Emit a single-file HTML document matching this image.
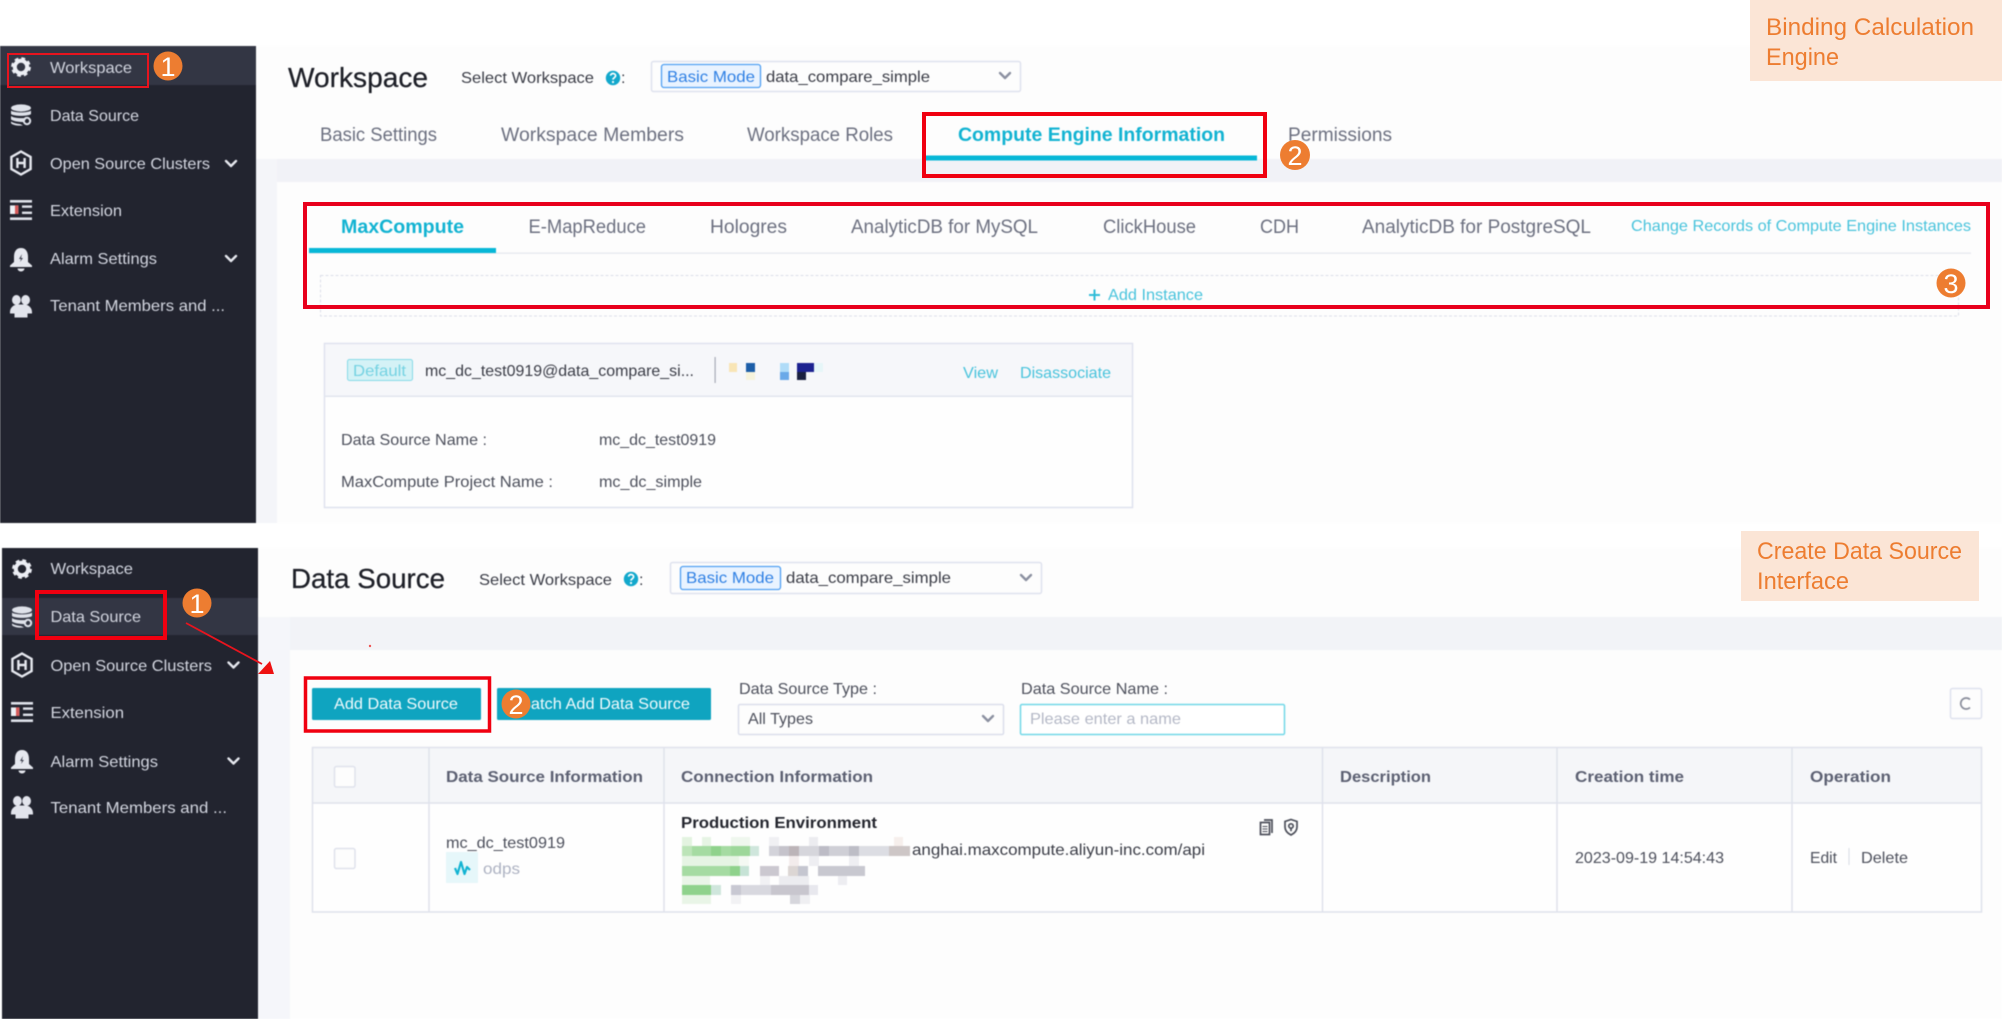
<!DOCTYPE html>
<html lang="en">
<head>
<meta charset="utf-8">
<title>Binding Calculation Engine and Create Data Source Interface</title>
<style>
html,body{margin:0;padding:0;background:#fff;width:2002px;height:1019px;overflow:hidden}
svg{display:block}
text{font-family:"Liberation Sans",Arial,sans-serif;white-space:pre}
.soft{filter:blur(.45px)}
.side{font-size:16px;fill:#d3d6e0}
.title{font-size:28px;fill:#1d1f27;stroke:#1d1f27;stroke-width:.25}
.lbl{font-size:16px;fill:#4d505c}
.dark{font-size:16px;fill:#3a3c46}
.tab{font-size:19px;fill:#6c7080}
.act{font-size:19px;font-weight:bold;fill:#12b3d2}
.link{font-size:16px;fill:#48c3dc}
.th{font-size:16px;font-weight:bold;fill:#5c6072}
.num{font-size:27px;fill:#fff;text-anchor:middle}
.note{font-size:24px;fill:#ed7d31}
.ln{fill:none;stroke:#dfe2ec;stroke-width:1.5}
.chev{fill:none;stroke-width:2.4;stroke-linecap:round;stroke-linejoin:round}
</style>
</head>
<body>
<svg xmlns="http://www.w3.org/2000/svg" width="2002" height="1019" viewBox="0 0 2002 1019">
<defs>
  <g id="i-gear">
    <circle r="8.2" fill="none" stroke="#eceef4" stroke-width="3.4" stroke-dasharray="3.6 2.85"/>
    <circle r="6.2" fill="none" stroke="#eceef4" stroke-width="4"/>
  </g>
  <g id="i-db" fill="#dfe2ea">
    <ellipse cx="0" cy="-7" rx="10" ry="3.6"/>
    <path d="M-10-4.5C-7-2 7-2 10-4.5V-1C7 1.5-7 1.5-10-1Z"/>
    <path d="M-10 1C-7 3.5 3 3.5 6 2.5L3 7C-3 7-8 6-10 4.5Z"/>
    <path d="M-10 6.5C-7 8.5-2 9-1 9L2 10.5C-4 11-9 10-10 8Z"/>
    <circle cx="6" cy="6" r="3.2" fill="none" stroke="#dfe2ea" stroke-width="2"/>
  </g>
  <g id="i-hex">
    <path d="M0-11.5 9.6-6V6L0 11.500-9.600 6V-6Z" fill="none" stroke="#e6e8ef" stroke-width="2.400"/>
    <path d="M-3.600-5V5M3.600-5V5M-3.600 0H3.600" fill="none" stroke="#e6e8ef" stroke-width="2.400"/>
  </g>
  <g id="i-ext" fill="#dfe2ea">
    <rect x="-11" y="-10" width="22" height="2.600"/>
    <rect x="-11" y="7.400" width="22" height="2.600"/>
    <rect x="-11" y="-4.600" width="8.400" height="8.600" fill="#eef0f5"/>
    <rect x="-6" y="-4.600" width="3.400" height="8.600" fill="#d65a5a"/>
    <rect x="1" y="-4.600" width="10" height="2.400"/>
    <rect x="1" y="1.600" width="10" height="2.400"/>
  </g>
  <g id="i-bell" fill="#e6e8ef">
    <path d="M0-11C-5-11-7-7-7-2V3L-11 6.500V8H11V6.500L7 3V-2C7-7 5-11 0-11Z"/>
    <path d="M-3.500 9.500A3.500 3 0 0 0 3.500 9.500Z"/>
    <path d="M1-5-2 0H0L-1 3 2-1H0Z" fill="#3b3e4c"/>
  </g>
  <g id="i-ppl" fill="#e2e4ec">
    <ellipse cx="-4.600" cy="-6" rx="4.400" ry="5"/>
    <ellipse cx="4.600" cy="-6" rx="4.400" ry="5"/>
    <path d="M-11 6C-11 2-8-.5-5-1.500H5C8-.5 11 2 11 6V7.500H6.500V11.500H-6.500V7.500H-11Z"/>
  </g>
  <g id="i-help">
    <circle r="7.200" fill="#12a8cc"/>
    <path d="M-2.400-2.400C-2.400-5.200 2.600-5.200 2.600-2.200 2.600-.3 0-.4 0 1.600" fill="none" stroke="#fff" stroke-width="1.700"/>
    <circle cy="4" r="1.100" fill="#fff"/>
  </g>
</defs>

<!-- ===== TOP PANEL ===== -->
<g class="soft">
  <rect x="256" y="46" width="1746" height="477" fill="#fdfdfd"/>
  <rect x="256" y="159" width="1746" height="23" fill="#f1f2f7"/>
  <rect x="256" y="159" width="21" height="364" fill="#f4f5f9"/>

  <!-- sidebar -->
  <rect x="0" y="46" width="256" height="477" fill="#22242f"/>
  <rect x="0" y="46" width="256" height="39" fill="#333644"/>
  <use href="#i-gear" x="21" y="67"/>
  <use href="#i-db" x="21" y="115"/>
  <use href="#i-hex" x="21" y="163"/>
  <use href="#i-ext" x="21" y="210"/>
  <use href="#i-bell" x="21" y="259"/>
  <use href="#i-ppl" x="21" y="306"/>
  <text class="side" x="50" y="73" textLength="82" lengthAdjust="spacingAndGlyphs">Workspace</text>
  <text class="side" x="50" y="121" textLength="89" lengthAdjust="spacingAndGlyphs">Data Source</text>
  <text class="side" x="50" y="169" textLength="160" lengthAdjust="spacingAndGlyphs">Open Source Clusters</text>
  <text class="side" x="50" y="216" textLength="72" lengthAdjust="spacingAndGlyphs">Extension</text>
  <text class="side" x="50" y="264" textLength="107" lengthAdjust="spacingAndGlyphs">Alarm Settings</text>
  <text class="side" x="50" y="311" textLength="175" lengthAdjust="spacingAndGlyphs">Tenant Members and ...</text>
  <path class="chev" stroke="#e6e8ef" d="M226 161l5 5 5-5M226 256l5 5 5-5"/>

  <!-- header -->
  <text class="title" x="288" y="87" textLength="140" lengthAdjust="spacingAndGlyphs">Workspace</text>
  <text class="dark" x="461" y="83" textLength="133" lengthAdjust="spacingAndGlyphs">Select Workspace</text>
  <use href="#i-help" x="613" y="78"/>
  <text class="dark" x="621" y="83">:</text>
  <rect x="651.500" y="61.500" width="369" height="30" rx="2" fill="#fdfdfd" stroke="#dfe2ee" stroke-width="1.500"/>
  <rect x="661.500" y="64.500" width="99" height="23" rx="2.500" fill="#e9f3ff" stroke="#4f9ff2" stroke-width="1.300"/>
  <text class="lbl" style="fill:#2f80e4" x="667" y="82" textLength="88" lengthAdjust="spacingAndGlyphs">Basic Mode</text>
  <text class="dark" x="766" y="82" textLength="164" lengthAdjust="spacingAndGlyphs">data_compare_simple</text>
  <path class="chev" stroke="#8b90a0" d="M1000 73l5 5 5-5"/>

  <text class="tab" x="320" y="141" textLength="117" lengthAdjust="spacingAndGlyphs">Basic Settings</text>
  <text class="tab" x="501" y="141" textLength="183" lengthAdjust="spacingAndGlyphs">Workspace Members</text>
  <text class="tab" x="747" y="141" textLength="146" lengthAdjust="spacingAndGlyphs">Workspace Roles</text>
  <text class="act" x="958" y="141" textLength="267" lengthAdjust="spacingAndGlyphs">Compute Engine Information</text>
  <rect x="925" y="155.500" width="332" height="5" fill="#07b7d7"/>
  <text class="tab" x="1288" y="141" textLength="104" lengthAdjust="spacingAndGlyphs">Permissions</text>

  <!-- engine tabs -->
  <rect x="309" y="252.500" width="1662" height="1.300" fill="#e6e8ef"/>
  <text class="act" x="341" y="233" textLength="123" lengthAdjust="spacingAndGlyphs">MaxCompute</text>
  <rect x="309" y="248" width="187" height="5" fill="#07b7d7"/>
  <text class="tab" x="528.500" y="233" textLength="117.500" lengthAdjust="spacingAndGlyphs">E-MapReduce</text>
  <text class="tab" x="710" y="233" textLength="77" lengthAdjust="spacingAndGlyphs">Hologres</text>
  <text class="tab" x="851" y="233" textLength="187" lengthAdjust="spacingAndGlyphs">AnalyticDB for MySQL</text>
  <text class="tab" x="1103" y="233" textLength="93" lengthAdjust="spacingAndGlyphs">ClickHouse</text>
  <text class="tab" x="1260" y="233" textLength="39" lengthAdjust="spacingAndGlyphs">CDH</text>
  <text class="tab" x="1362" y="233" textLength="229" lengthAdjust="spacingAndGlyphs">AnalyticDB for PostgreSQL</text>
  <text class="link" x="1631" y="231" textLength="340" lengthAdjust="spacingAndGlyphs">Change Records of Compute Engine Instances</text>

  <rect x="320.500" y="275.500" width="1638" height="40.500" fill="none" stroke="#dcdfe9" stroke-width="1" stroke-dasharray="3 2"/>
  <path d="M1089 295h11M1094.500 289.500v11" stroke="#2fbcd8" stroke-width="2"/>
  <text class="link" x="1108" y="300" textLength="95" lengthAdjust="spacingAndGlyphs">Add Instance</text>

  <!-- instance card -->
  <rect x="324.500" y="343.500" width="808" height="164" fill="#fefefe" stroke="#dfe2ee" stroke-width="1.500"/>
  <rect x="325.500" y="344.500" width="806" height="51" fill="#f6f7fa"/>
  <rect x="324.500" y="395.500" width="808" height="1.500" fill="#e2e5ef"/>
  <rect x="347.500" y="359.500" width="65" height="21" rx="2" fill="#d4f2f6" stroke="#86dae8"/>
  <text class="lbl" style="fill:#74d2e2" x="353" y="376" textLength="53" lengthAdjust="spacingAndGlyphs">Default</text>
  <text class="dark" x="425" y="376" textLength="269" lengthAdjust="spacingAndGlyphs">mc_dc_test0919@data_compare_si...</text>
  <rect x="714.500" y="357" width="1.200" height="26" fill="#a8abb6"/>
  <rect x="729" y="363" width="8" height="9" fill="#f8e5b5"/>
  <rect x="746" y="363" width="9" height="9" fill="#1d5ea8"/>
  <rect x="746" y="372" width="9" height="8" fill="#f6f3dc"/>
  <rect x="780" y="363" width="9" height="9" fill="#b0dcf8"/>
  <rect x="780" y="372" width="9" height="8" fill="#6aa9e8"/>
  <rect x="797" y="363" width="17" height="9" fill="#1c2290"/>
  <rect x="797" y="372" width="9" height="8" fill="#1a2040"/>
  <rect x="814" y="363" width="9" height="9" fill="#e6f6f8"/>
  <text class="link" x="963" y="378" textLength="35" lengthAdjust="spacingAndGlyphs">View</text>
  <text class="link" x="1020" y="378" textLength="91" lengthAdjust="spacingAndGlyphs">Disassociate</text>
  <text class="lbl" x="341" y="445" textLength="146" lengthAdjust="spacingAndGlyphs">Data Source Name :</text>
  <text class="lbl" x="599" y="445" textLength="117" lengthAdjust="spacingAndGlyphs">mc_dc_test0919</text>
  <text class="lbl" x="341" y="487" textLength="212" lengthAdjust="spacingAndGlyphs">MaxCompute Project Name :</text>
  <text class="lbl" x="599" y="487" textLength="103" lengthAdjust="spacingAndGlyphs">mc_dc_simple</text>
</g>

<!-- top annotations -->
<rect x="1750" y="0" width="252" height="81" fill="#fbe5d6"/>
<text class="note" x="1766" y="35" textLength="208" lengthAdjust="spacingAndGlyphs">Binding Calculation</text>
<text class="note" x="1766" y="65" textLength="73" lengthAdjust="spacingAndGlyphs">Engine</text>
<rect x="8" y="54" width="140" height="33" fill="none" stroke="#e8141e" stroke-width="2"/>
<rect x="924" y="114" width="341" height="62" fill="none" stroke="#f00010" stroke-width="4"/>
<rect x="305" y="204" width="1683" height="103" fill="none" stroke="#e8001c" stroke-width="4"/>
<circle cx="168" cy="66" r="14.500" fill="#ed7d31"/><text class="num" x="168" y="76">1</text>
<circle cx="1295" cy="155" r="15" fill="#ed7d31"/><text class="num" x="1295" y="165">2</text>
<circle cx="1951" cy="283" r="14.500" fill="#ed7d31"/><text class="num" x="1951" y="293">3</text>

<!-- ===== BOTTOM PANEL ===== -->
<g class="soft">
  <rect x="258" y="548" width="1744" height="471" fill="#fdfdfd"/>
  <rect x="258" y="617" width="1744" height="33" fill="#f2f3f7"/>
  <rect x="258" y="617" width="32" height="402" fill="#f5f6fa"/>

  <rect x="2" y="548" width="256" height="471" fill="#22242f"/>
  <rect x="2" y="598" width="256" height="37" fill="#333644"/>
  <use href="#i-gear" x="22" y="569"/>
  <use href="#i-db" x="22" y="617"/>
  <use href="#i-hex" x="22" y="665"/>
  <use href="#i-ext" x="22" y="712"/>
  <use href="#i-bell" x="22" y="761"/>
  <use href="#i-ppl" x="22" y="807"/>
  <text class="side" x="50.500" y="574" textLength="82.500" lengthAdjust="spacingAndGlyphs">Workspace</text>
  <text class="side" x="50.500" y="622" textLength="90.500" lengthAdjust="spacingAndGlyphs">Data Source</text>
  <text class="side" x="50.500" y="671" textLength="161.500" lengthAdjust="spacingAndGlyphs">Open Source Clusters</text>
  <text class="side" x="50.500" y="718" textLength="73.500" lengthAdjust="spacingAndGlyphs">Extension</text>
  <text class="side" x="50.500" y="767" textLength="107.500" lengthAdjust="spacingAndGlyphs">Alarm Settings</text>
  <text class="side" x="50.500" y="813" textLength="176.500" lengthAdjust="spacingAndGlyphs">Tenant Members and ...</text>
  <path class="chev" stroke="#e6e8ef" d="M228.500 662.500l5 5 5-5M228.500 758.500l5 5 5-5"/>

  <text class="title" x="291" y="588" textLength="154" lengthAdjust="spacingAndGlyphs">Data Source</text>
  <text class="dark" x="479" y="585" textLength="133" lengthAdjust="spacingAndGlyphs">Select Workspace</text>
  <use href="#i-help" x="631" y="579"/>
  <text class="dark" x="639" y="585">:</text>
  <rect x="670.500" y="562.500" width="371" height="31" rx="2" fill="#fdfdfd" stroke="#dfe2ee" stroke-width="1.500"/>
  <rect x="680.500" y="566.500" width="100" height="23" rx="2.500" fill="#e9f3ff" stroke="#4f9ff2" stroke-width="1.300"/>
  <text class="lbl" style="fill:#2f80e4" x="686" y="583" textLength="88" lengthAdjust="spacingAndGlyphs">Basic Mode</text>
  <text class="dark" x="786" y="583" textLength="165" lengthAdjust="spacingAndGlyphs">data_compare_simple</text>
  <path class="chev" stroke="#8b90a0" d="M1021 575l5 5 5-5"/>

  <!-- toolbar -->
  <rect x="312" y="688" width="169" height="32" rx="1.500" fill="#0fa4c0"/>
  <text class="side" style="fill:#f2fbfd" x="334" y="709" textLength="124" lengthAdjust="spacingAndGlyphs">Add Data Source</text>
  <rect x="497" y="688" width="214" height="32" rx="1.500" fill="#0fa4c0"/>
  <text class="side" style="fill:#f2fbfd" x="520" y="709" textLength="170" lengthAdjust="spacingAndGlyphs">Batch Add Data Source</text>
  <text class="lbl" x="739" y="694" textLength="138" lengthAdjust="spacingAndGlyphs">Data Source Type :</text>
  <text class="lbl" x="1021" y="694" textLength="147" lengthAdjust="spacingAndGlyphs">Data Source Name :</text>
  <rect x="738.500" y="704.500" width="265" height="30" rx="1.500" fill="#fdfdfd" stroke="#dcdfec" stroke-width="1.500"/>
  <text class="lbl" x="748" y="724" textLength="65" lengthAdjust="spacingAndGlyphs">All Types</text>
  <path class="chev" stroke="#8b90a0" d="M983 716l5 5 5-5"/>
  <rect x="1020.500" y="704.500" width="264" height="30" rx="1.500" fill="#fff" stroke="#72d8e8" stroke-width="1.500"/>
  <text class="lbl" style="fill:#b4b8c6" x="1030" y="724" textLength="151" lengthAdjust="spacingAndGlyphs">Please enter a name</text>
  <rect x="1950.500" y="688.500" width="31" height="30" rx="2" fill="#fdfdfd" stroke="#dfe2ee" stroke-width="1.500"/>
  <path d="M1970 699.500A5.500 5.500 0 1 0 1970 707.500" fill="none" stroke="#8a8e9c" stroke-width="1.700"/>

  <!-- table -->
  <rect x="312.500" y="747.500" width="1669" height="164.500" fill="#fefefe"/>
  <rect x="312.500" y="747.500" width="1669" height="55.500" fill="#f5f6f9"/>
  <rect class="ln" x="312.500" y="747.500" width="1669" height="164.500"/>
  <path class="ln" d="M312.500 803H1981.500M429 747.500V912M664 747.500V912M1322.500 747.500V912M1557 747.500V912M1792 747.500V912"/>
  <rect x="334.500" y="766.500" width="20.500" height="20.500" rx="2" fill="#fdfdfd" stroke="#dfe2ec" stroke-width="1.500"/>
  <rect x="334.500" y="848.500" width="20.500" height="20" rx="2" fill="#fdfdfd" stroke="#dfe2ec" stroke-width="1.500"/>
  <text class="th" x="446" y="782" textLength="197" lengthAdjust="spacingAndGlyphs">Data Source Information</text>
  <text class="th" x="681" y="782" textLength="192" lengthAdjust="spacingAndGlyphs">Connection Information</text>
  <text class="th" x="1340" y="782" textLength="91" lengthAdjust="spacingAndGlyphs">Description</text>
  <text class="th" x="1575" y="782" textLength="109" lengthAdjust="spacingAndGlyphs">Creation time</text>
  <text class="th" x="1810" y="782" textLength="81" lengthAdjust="spacingAndGlyphs">Operation</text>

  <text class="lbl" x="446" y="848" textLength="119" lengthAdjust="spacingAndGlyphs">mc_dc_test0919</text>
  <rect x="446" y="852" width="32" height="31" fill="#e6f7fa"/>
  <path d="M455 868l2.500 6 3.500-12 3.500 12 2.500-7 3 3" fill="none" stroke="#12b3d2" stroke-width="2.200" stroke-linejoin="round"/>
  <text class="lbl" style="fill:#adb2c2" x="483" y="874" textLength="37" lengthAdjust="spacingAndGlyphs">odps</text>

  <text class="th" style="fill:#24262e" x="681" y="828" textLength="196" lengthAdjust="spacingAndGlyphs">Production Environment</text>

  <!-- mosaic -->
  <g>
    <rect x="682" y="837" width="10" height="9" fill="#e3f3e0"/><rect x="702" y="837" width="9" height="9" fill="#e6f4e4"/><rect x="731" y="837" width="19" height="9" fill="#eff7ee"/><rect x="769" y="837" width="10" height="9" fill="#f0f0f3"/><rect x="809" y="837" width="9" height="9" fill="#ececf0"/><rect x="894" y="837" width="9" height="9" fill="#f6efec"/>
    <rect x="682" y="846" width="10" height="10" fill="#bce4b8"/><rect x="692" y="846" width="19" height="10" fill="#a5dba2"/><rect x="711" y="846" width="10" height="10" fill="#8fd28c"/><rect x="721" y="846" width="10" height="10" fill="#a5dba2"/><rect x="731" y="846" width="19" height="10" fill="#9dd79a"/><rect x="750" y="846" width="9" height="10" fill="#cfe6dc"/>
    <rect x="769" y="846" width="10" height="10" fill="#d3d3da"/><rect x="779" y="846" width="10" height="10" fill="#c5c3cb"/><rect x="789" y="846" width="10" height="10" fill="#bcb4b8"/><rect x="799" y="846" width="20" height="10" fill="#d6d6dc"/><rect x="819" y="846" width="10" height="10" fill="#bdbcc6"/><rect x="829" y="846" width="20" height="10" fill="#cfcfd6"/><rect x="849" y="846" width="10" height="10" fill="#bdbdc6"/><rect x="859" y="846" width="30" height="10" fill="#dcdde3"/><rect x="889" y="846" width="21" height="10" fill="#cdc6c6"/>
    <rect x="682" y="856" width="57" height="10" fill="#e6f4e4"/><rect x="739" y="856" width="10" height="10" fill="#f4f9f3"/><rect x="789" y="856" width="10" height="10" fill="#f3ecec"/><rect x="809" y="856" width="10" height="10" fill="#eeeef2"/><rect x="849" y="856" width="10" height="10" fill="#eeeef2"/>
    <rect x="682" y="866" width="48" height="10" fill="#a5dba2"/><rect x="730" y="866" width="10" height="10" fill="#8fd28c"/><rect x="740" y="866" width="9" height="10" fill="#c6e3d6"/>
    <rect x="760" y="866" width="19" height="10" fill="#cbc8d0"/><rect x="788" y="866" width="10" height="10" fill="#dcd6d4"/><rect x="798" y="866" width="10" height="10" fill="#c5c6d0"/><rect x="818" y="866" width="47" height="10" fill="#c8c8d0"/>
    <rect x="682" y="876" width="28" height="9" fill="#eaf5e8"/><rect x="760" y="876" width="10" height="9" fill="#f1f1f4"/><rect x="779" y="876" width="30" height="9" fill="#ececf0"/><rect x="838" y="876" width="9" height="9" fill="#ededf1"/>
    <rect x="682" y="885" width="29" height="10" fill="#8fd28c"/><rect x="711" y="885" width="10" height="10" fill="#cfe6dc"/>
    <rect x="731" y="885" width="10" height="10" fill="#c8c8d2"/><rect x="741" y="885" width="30" height="10" fill="#d8d8df"/><rect x="771" y="885" width="38" height="10" fill="#c8c6ce"/><rect x="809" y="885" width="9" height="10" fill="#e8e8ee"/>
    <rect x="682" y="895" width="29" height="9" fill="#e9f5e7"/><rect x="790" y="895" width="10" height="9" fill="#d6d6dc"/><rect x="731" y="895" width="10" height="9" fill="#f2f2f4"/><rect x="800" y="895" width="10" height="9" fill="#efeff2"/>
  </g>
  <text class="dark" x="912" y="855" textLength="293" lengthAdjust="spacingAndGlyphs">anghai.maxcompute.aliyun-inc.com/api</text>

  <!-- copy + shield icons -->
  <g fill="none" stroke="#4a4d58" stroke-width="1.700">
    <path d="M1264 820h8v13"/>
    <rect x="1260.500" y="822.500" width="9" height="12" fill="#fdfdfd"/>
    <path d="M1262.500 826.500h5M1262.500 829h5M1262.500 831.500h5" stroke-width="1.100"/>
    <path d="M1291 819.500l6 2v5.500c0 3.800-3 6.500-6 8-3-1.500-6-4.200-6-8v-5.500Z"/>
    <circle cx="1291" cy="826" r="2.200"/>
    <path d="M1291 828.200v3"/>
  </g>

  <text class="lbl" x="1575" y="863" textLength="149" lengthAdjust="spacingAndGlyphs">2023-09-19 14:54:43</text>
  <text class="lbl" x="1810" y="863" textLength="27" lengthAdjust="spacingAndGlyphs">Edit</text>
  <rect x="1848.500" y="848" width="1" height="17" fill="#d8dbe4"/>
  <text class="lbl" x="1861" y="863" textLength="47" lengthAdjust="spacingAndGlyphs">Delete</text>
</g>

<!-- bottom annotations -->
<rect x="1741" y="531" width="238" height="70" fill="#fbe5d6"/>
<text class="note" x="1757" y="559" textLength="205" lengthAdjust="spacingAndGlyphs">Create Data Source</text>
<text class="note" x="1757" y="589" textLength="92" lengthAdjust="spacingAndGlyphs">Interface</text>
<rect x="37" y="592" width="128" height="46" fill="none" stroke="#f00010" stroke-width="4"/>
<rect x="305.500" y="678" width="184" height="53" fill="none" stroke="#f00010" stroke-width="3.500"/>
<circle cx="197" cy="603" r="14.500" fill="#ed7d31"/><text class="num" x="197" y="613">1</text>
<circle cx="516" cy="704" r="14.500" fill="#ed7d31"/><text class="num" x="516" y="714">2</text>
<path d="M186 623 262 664" stroke="#e8141e" stroke-width="1.800" fill="none"/>
<path d="M258 674 270 661 274 674Z" fill="#ee1111"/>
<circle cx="370" cy="646" r="1.200" fill="#ee5555"/>
</svg>
</body>
</html>
